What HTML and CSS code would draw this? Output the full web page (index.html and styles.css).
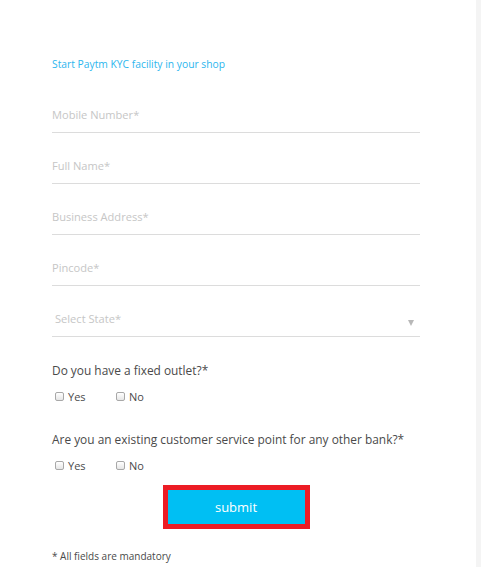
FILE: index.html
```html
<!DOCTYPE html>
<html>
<head>
<meta charset="utf-8">
<link rel="stylesheet" href="styles.css">
</head>
<body>
<div class="page">
  <form class="kyc-form">
    <p class="intro">Start Paytm KYC facility in your shop</p>
    <div class="field"><input class="text-input" type="text" placeholder="Mobile Number*"></div>
    <div class="field"><input class="text-input" type="text" placeholder="Full Name*"></div>
    <div class="field"><input class="text-input" type="text" placeholder="Business Address*"></div>
    <div class="field"><input class="text-input" type="text" placeholder="Pincode*"></div>
    <div class="field select-field">
      <span class="select-label">Select State*</span>
      <span class="select-arrow"></span>
    </div>
    <p class="question q1">Do you have a fixed outlet?*</p>
    <div class="options">
      <label class="option"><input class="check" type="checkbox"><span>Yes</span></label>
      <label class="option"><input class="check" type="checkbox"><span>No</span></label>
    </div>
    <p class="question q2">Are you an existing customer service point for any other bank?*</p>
    <div class="options">
      <label class="option"><input class="check" type="checkbox"><span>Yes</span></label>
      <label class="option"><input class="check" type="checkbox"><span>No</span></label>
    </div>
    <div class="submit-row">
      <button class="submit" type="button">submit</button>
    </div>
    <p class="note">* All fields are mandatory</p>
  </form>
</div>
</body>
</html>
```
FILE: styles.css
```css
html, body {
  margin: 0;
  padding: 0;
}
body {
  background: #f4f4f4;
  font-family: "Open Sans", "Liberation Sans", sans-serif;
}
.page {
  width: 476px;
  height: 567px;
  background: #ffffff;
  overflow: hidden;
}
.kyc-form {
  width: 368px;
  padding: 0 0 0 52px;
}
.intro {
  margin: 0;
  padding-top: 56px;
  font-size: 10.3px;
  line-height: 16px;
  color: #2cb6ee;
}
.field {
  height: 34px;
  border-bottom: 1px solid #dcdcdc;
  margin-bottom: 16px;
}
.field:first-of-type {
  margin-top: 26px;
}
.text-input {
  width: 100%;
  height: 34px;
  border: 0;
  padding: 0 0 2px;
  box-sizing: border-box;
  outline: none;
  font-family: inherit;
  font-size: 11.1px;
  color: #444;
  background: transparent;
}
.text-input::placeholder {
  color: #c6c6c6;
}
.select-field {
  display: flex;
  align-items: center;
  justify-content: space-between;
  padding: 0 6px 0 3px;
}
.select-label {
  font-size: 11.1px;
  color: #c6c6c6;
  margin-top: -2px;
}
.select-arrow {
  width: 0;
  height: 0;
  border-left: 3px solid transparent;
  border-right: 3px solid transparent;
  border-top: 6px solid #b8b8b8;
  margin-top: 8px;
}
.question {
  margin: 0;
  font-size: 11.9px;
  line-height: 18px;
  color: #4a4a4a;
}
.q1 {
  margin-top: 24px;
}
.q2 {
  margin-top: 25px;
}
.options {
  display: flex;
  margin-top: 8px;
  padding-left: 3px;
  height: 18px;
  align-items: center;
}
.option {
  display: flex;
  align-items: center;
  width: 61px;
  font-size: 11px;
  color: #4a4a4a;
}
.check {
  appearance: none;
  -webkit-appearance: none;
  width: 9px;
  height: 9px;
  margin: 0 4px 0 0;
  border: 1px solid #a8a8a8;
  border-radius: 2px;
  background: linear-gradient(#ffffff, #e6e6e6);
  box-sizing: border-box;
}
.submit-row {
  display: flex;
  justify-content: center;
  margin-top: 11px;
}
.submit {
  width: 147px;
  height: 44px;
  border: 5px solid #ec1c24;
  background: #00bff3;
  color: #ffffff;
  font-family: inherit;
  font-size: 13px;
  padding: 0;
  cursor: pointer;
}
.note {
  margin: 20px 0 0;
  font-size: 10px;
  line-height: 14px;
  color: #4a4a4a;
}
```
